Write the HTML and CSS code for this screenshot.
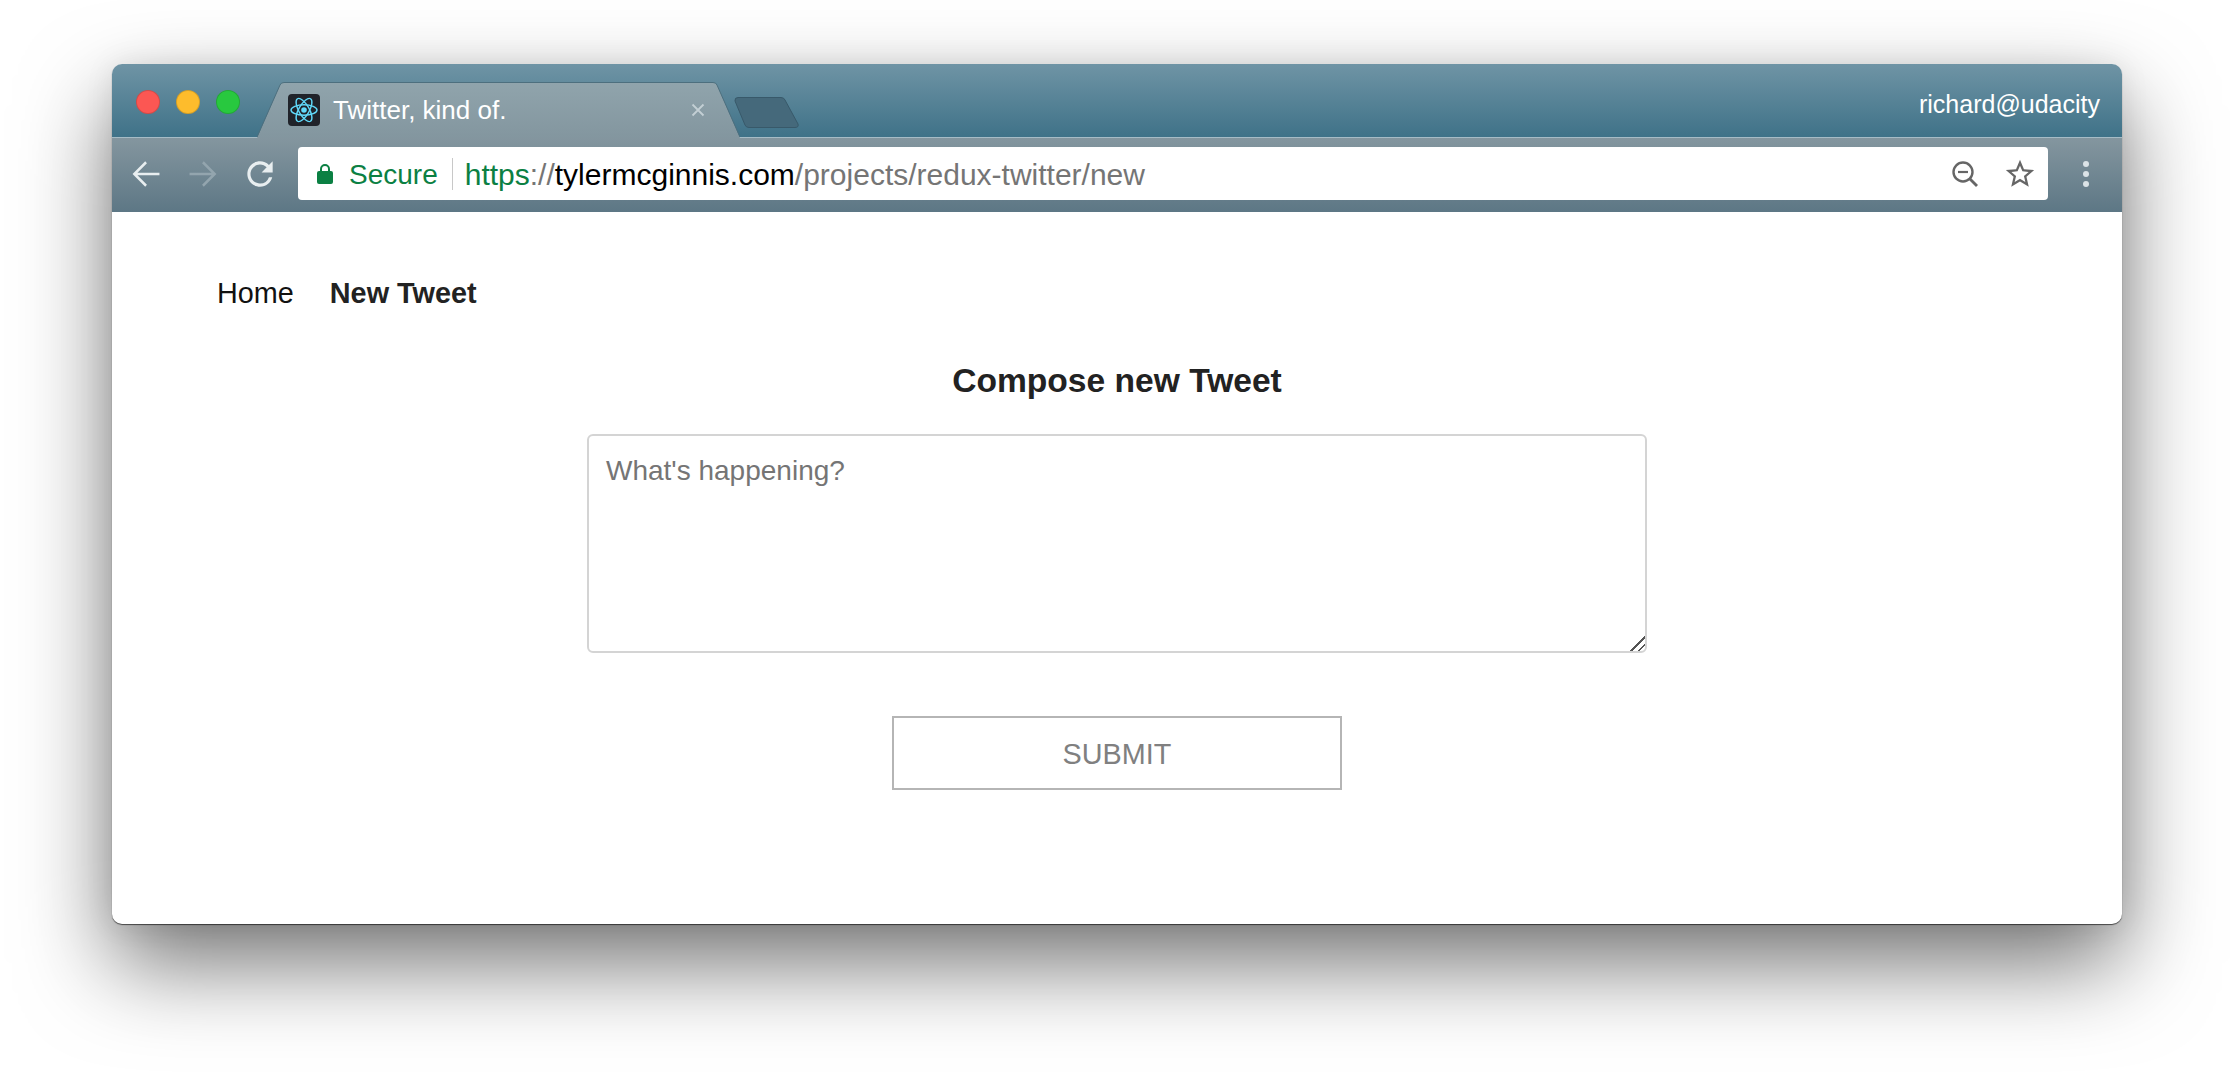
FILE: index.html
```html
<!DOCTYPE html>
<html lang="en">
<head>
    <meta charset="UTF-8">
    <meta name="viewport" content="width=device-width, initial-scale=1.0">
    <title>Twitter, kind of.</title>
    <link rel="stylesheet" href="styles.css">
</head>
<body>
    <div class="browser-window">
        <div class="title-bar">
            <div class="traffic-lights">
                <span class="light light-red"></span>
                <span class="light light-yellow"></span>
                <span class="light light-green"></span>
            </div>
            <div class="tab">
                <svg class="tab-shape" viewBox="0 0 483 56" preserveAspectRatio="none">
                    <defs>
                        <linearGradient id="tabFill" x1="0" y1="0" x2="0" y2="1">
                            <stop offset="0" stop-color="#90a4ac"/>
                            <stop offset="1" stop-color="#83969f"/>
                        </linearGradient>
                    </defs>
                    <path d="M0 56 L23 3 Q24 .5 27 .5 L456 .5 Q459 .5 460 3 L483 56 Z" fill="url(#tabFill)"/>
                    <path d="M0 55 L23 3 Q24 .5 27 .5 L456 .5 Q459 .5 460 3 L483 55" fill="none" stroke="#4d6f7e" stroke-width="1"/>
                </svg>
                <span class="favicon">
                    <svg viewBox="0 0 32 32" width="32" height="32">
                        <circle cx="16" cy="16" r="2.8" fill="#61dafb"/>
                        <g fill="none" stroke="#61dafb" stroke-width="1.4">
                            <ellipse cx="16" cy="16" rx="13" ry="5.2"/>
                            <ellipse cx="16" cy="16" rx="13" ry="5.2" transform="rotate(60 16 16)"/>
                            <ellipse cx="16" cy="16" rx="13" ry="5.2" transform="rotate(120 16 16)"/>
                        </g>
                    </svg>
                </span>
                <span class="tab-title">Twitter, kind of.</span>
                <svg class="tab-close" viewBox="0 0 14 14" width="14" height="14">
                    <path d="M1.5 1.5 L12.5 12.5 M12.5 1.5 L1.5 12.5" stroke="#c3cfd4" stroke-width="1.8"/>
                </svg>
            </div>
            <svg class="new-tab" viewBox="0 0 65 31" width="65" height="31">
                <path d="M1 4 Q.5 .5 4 .5 L47 .5 Q50 .5 51 3 L64 27 Q65 30.5 61 30.5 L15 30.5 Q12 30.5 11 28 Z" fill="#45697b" stroke="#38596a"/>
            </svg>
            <div class="profile-name">richard@udacity</div>
        </div>

        <div class="toolbar">
            <svg class="nav-icon" viewBox="0 0 24 24" width="38" height="38">
                <path d="M20.5 11.2H6.6l6-6L11.5 4l-8 8 8 8 1.1-1.2-6-6h13.9v-1.6z" fill="#e8eef0"/>
            </svg>
            <svg class="nav-icon" viewBox="0 0 24 24" width="38" height="38">
                <path d="M3.5 11.2h13.9l-6-6L12.5 4l8 8-8 8-1.1-1.2 6-6H3.5v-1.6z" fill="#93a5ae"/>
            </svg>
            <svg class="nav-icon" viewBox="0 0 24 24" width="38" height="38">
                <path d="M17.65 6.35A7.958 7.958 0 0 0 12 4c-4.42 0-7.99 3.58-7.99 8s3.57 8 7.99 8c3.73 0 6.84-2.55 7.73-6h-2.08A5.99 5.99 0 0 1 12 18c-3.31 0-6-2.69-6-6s2.69-6 6-6c1.66 0 3.14.69 4.22 1.78L13 11h7V4l-2.35 2.35z" fill="#e8eef0"/>
            </svg>
            <div class="address-bar">
                <svg class="lock-icon" viewBox="0 0 16 22" width="16" height="22">
                    <path d="M4 9V6a4 4 0 0 1 8 0v3" fill="none" stroke="#0b8043" stroke-width="2"/>
                    <rect x="0" y="8" width="16" height="13" rx="2" fill="#0b8043"/>
                </svg>
                <span class="secure-label">Secure</span>
                <span class="address-divider"></span>
                <span class="address-url"><span class="url-scheme">https</span>://<span class="url-host">tylermcginnis.com</span>/projects/redux-twitter/new</span>
                <svg class="zoom-icon" viewBox="0 0 28 28" width="28" height="28">
                    <circle cx="12" cy="12" r="9.5" fill="none" stroke="#666" stroke-width="2.4"/>
                    <path d="M7 12h10" stroke="#666" stroke-width="2.2"/>
                    <path d="M19 19l7 7" stroke="#666" stroke-width="2.8"/>
                </svg>
                <svg class="star-icon" viewBox="0 0 24 24" width="34" height="34">
                    <path d="M22 9.24l-7.19-.62L12 2 9.19 8.63 2 9.24l5.46 4.73L5.82 21 12 17.27 18.18 21l-1.63-7.03L22 9.24zM12 15.4l-3.76 2.27 1-4.28-3.32-2.88 4.38-.38L12 6.1l1.71 4.04 4.38.38-3.32 2.88 1 4.28L12 15.4z" fill="#666"/>
                </svg>
            </div>
            <div class="menu-dots">
                <span></span>
                <span></span>
                <span></span>
            </div>
        </div>

        <div class="page">
            <nav class="page-nav">
                <a href="#">Home</a>
                <a href="#" class="active">New Tweet</a>
            </nav>
            <h3 class="compose-title">Compose new Tweet</h3>
            <form class="compose-form">
                <textarea class="compose-input" placeholder="What's happening?"></textarea>
                <button type="submit" class="compose-submit">SUBMIT</button>
            </form>
        </div>
    </div>
</body>
</html>
```

FILE: styles.css
```css
* {
    box-sizing: border-box;
}

body {
    margin: 0;
    height: 1084px;
    padding: 64px 112px 0;
    overflow: hidden;
    background-color: white;
    font-family: "Liberation Sans", Arial, sans-serif;
}

.browser-window {
    display: flex;
    flex-direction: column;
    width: 2010px;
    height: 860px;
    border-radius: 10px;
    background-color: white;
    box-shadow: 0 40px 90px rgba(0,0,0,0.55), 0 0 30px rgba(0,0,0,0.08), 0 1px 1px rgba(0,0,0,0.6);
}

/* title bar */
.title-bar {
    display: flex;
    align-items: center;
    flex-shrink: 0;
    height: 73px;
    padding-left: 24px;
    border-radius: 10px 10px 0 0;
    background: linear-gradient(#6f94a5, #3f7288);
}

.traffic-lights {
    display: flex;
    gap: 16px;
    margin-top: 3px;
}

.light {
    width: 24px;
    height: 24px;
    border-radius: 50%;
    border: 1px solid rgba(0,0,0,0.15);
}

.light-red {
    background-color: #fc5753;
}

.light-yellow {
    background-color: #fdbc2c;
}

.light-green {
    background-color: #28c83f;
}

.tab {
    position: relative;
    z-index: 1;
    display: flex;
    align-items: center;
    align-self: flex-end;
    width: 483px;
    height: 56px;
    margin-left: 17px;
    margin-bottom: -1px;
    padding: 0 35px 0 31px;
}

.tab-shape {
    position: absolute;
    left: 0;
    top: 0;
    width: 100%;
    height: 100%;
}

.favicon {
    position: relative;
    width: 32px;
    height: 32px;
    border-radius: 4px;
    background-color: #20232a;
}

.favicon svg {
    display: block;
}

.tab-title {
    position: relative;
    flex: 1;
    margin-left: 13px;
    color: white;
    font-size: 26px;
    white-space: nowrap;
}

.tab-close {
    position: relative;
}

.new-tab {
    align-self: flex-end;
    margin-left: -6px;
    margin-bottom: 9px;
}

.profile-name {
    margin-left: auto;
    margin-top: 7px;
    padding-right: 22px;
    color: white;
    font-size: 25px;
}

/* toolbar */
.toolbar {
    display: flex;
    align-items: center;
    flex-shrink: 0;
    height: 75px;
    padding: 9px 33px 12px 15px;
    border-top: 1px solid #a6bcc6;
    background: linear-gradient(#84969f, #5d7785);
}

.nav-icon {
    margin-right: 19px;
}

.address-bar {
    display: flex;
    align-items: center;
    flex: 1;
    height: 53px;
    padding: 0 11px 0 19px;
    border-radius: 4px;
    background-color: white;
    font-size: 28px;
}

.secure-label {
    margin-left: 16px;
    padding-top: 2px;
    color: #0b8043;
}

.address-divider {
    width: 1px;
    height: 32px;
    margin: 0 12px 0 14px;
    background-color: #c8c8c8;
}

.address-url {
    padding-top: 2px;
    color: #757575;
    font-size: 30px;
    white-space: nowrap;
}

.url-scheme {
    color: #0b8043;
}

.url-host {
    color: black;
}

.zoom-icon {
    margin-left: auto;
}

.star-icon {
    margin-left: 24px;
}

.menu-dots {
    display: flex;
    flex-direction: column;
    gap: 4px;
    margin-left: 35px;
}

.menu-dots span {
    width: 6px;
    height: 6px;
    border-radius: 50%;
    background-color: #dbe3e7;
}

/* page content */
.page {
    flex: 1;
    border-radius: 0 0 10px 10px;
}

.page-nav {
    display: flex;
    gap: 36px;
    padding: 61px 0 0 105px;
    font-size: 28.8px;
    line-height: 40px;
}

.page-nav a {
    color: #111;
    text-decoration: none;
}

.page-nav a.active {
    color: #222;
    font-weight: bold;
}

.compose-title {
    margin: 48px 0 33px;
    color: #222;
    font-size: 33.6px;
    line-height: 40px;
    text-align: center;
}

.compose-form {
    display: flex;
    flex-direction: column;
    align-items: center;
}

.compose-input {
    width: 1060px;
    height: 219px;
    padding: 19px 17px;
    border: 2px solid #d4d4d4;
    border-radius: 6px;
    outline: none;
    font-family: "Liberation Sans", Arial, sans-serif;
    font-size: 28px;
    color: #222;
}

.compose-input::placeholder {
    color: #757575;
}

.compose-input::-webkit-resizer {
    background: linear-gradient(135deg, transparent 50%, #555 50%, #555 57%, transparent 57%, transparent 76%, #555 76%, #555 83%, transparent 83%);
}

.compose-submit {
    width: 450px;
    height: 74px;
    margin-top: 63px;
    padding-top: 3px;
    border: 2px solid #b5b5b5;
    background-color: white;
    color: #808080;
    font-family: "Liberation Sans", Arial, sans-serif;
    font-size: 28.8px;
}
```
